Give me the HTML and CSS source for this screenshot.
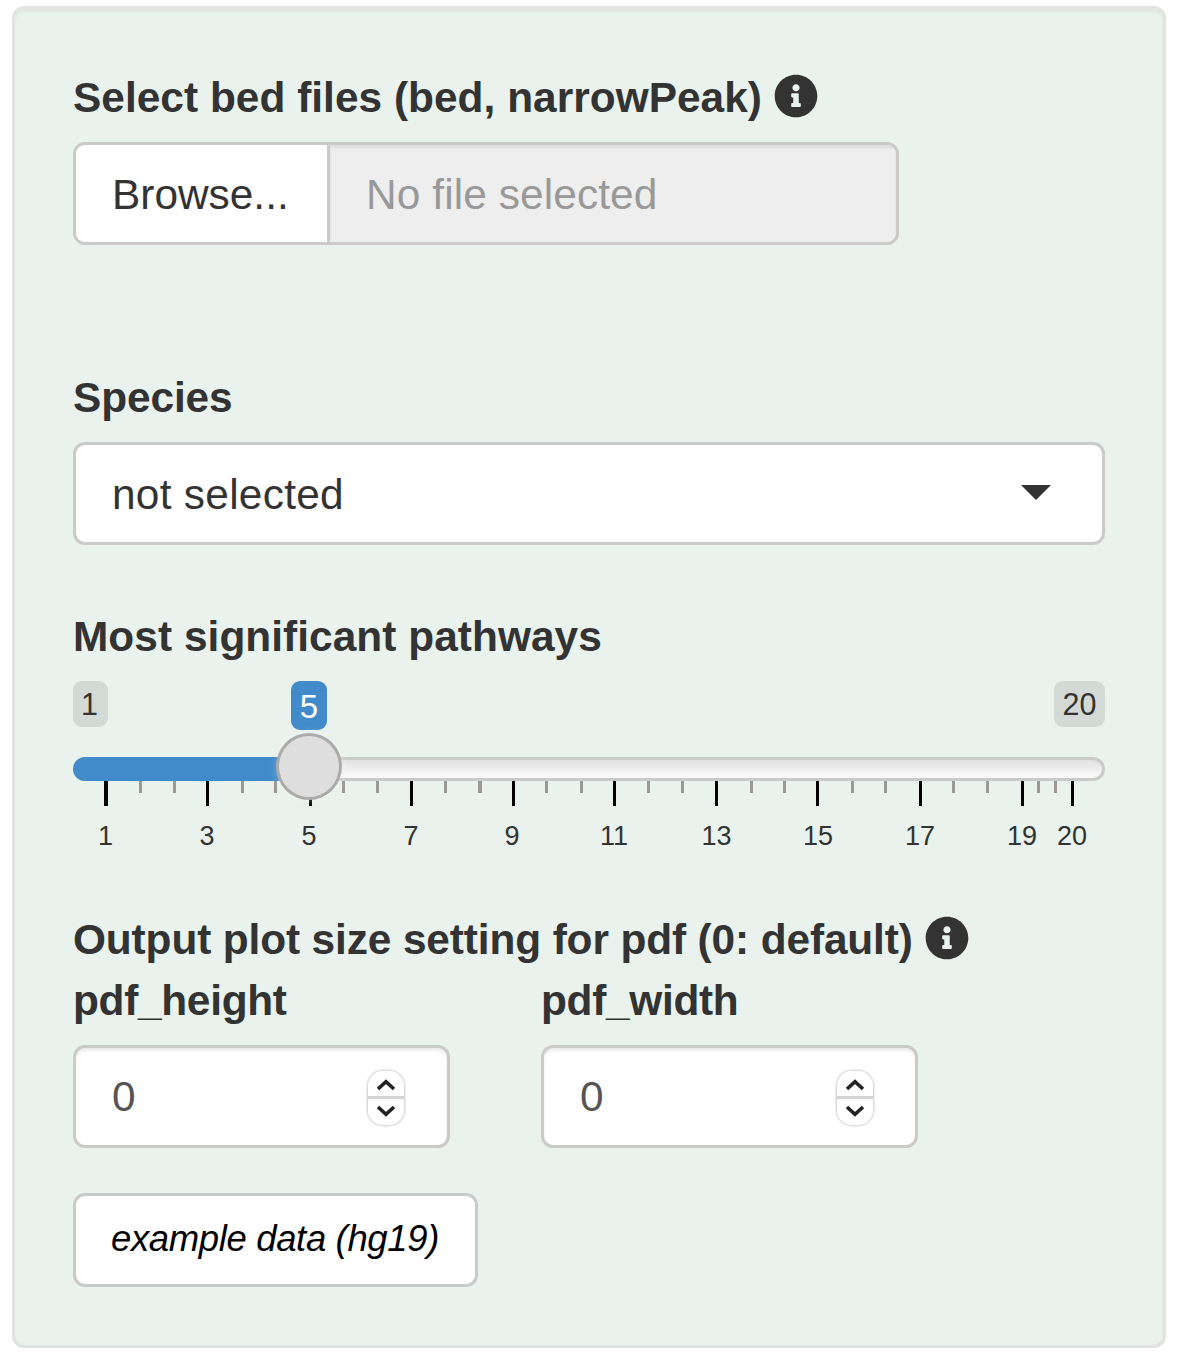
FILE: index.html
```
<!DOCTYPE html>
<html lang="en">
<head>
<meta charset="utf-8">
<title>Pathway settings</title>
<link rel="stylesheet" href="styles.css">
</head>
<body>
<svg class="defs" width="0" height="0" aria-hidden="true">
  <symbol id="info" viewBox="0 0 512 512"><path fill="currentColor" d="M256 8C119.043 8 8 119.083 8 256c0 136.997 111.043 248 248 248s248-111.003 248-248C504 119.083 392.957 8 256 8zm0 110c23.196 0 42 18.804 42 42s-18.804 42-42 42-42-18.804-42-42 18.804-42 42-42zm56 254c0 6.627-5.373 12-12 12h-88c-6.627 0-12-5.373-12-12v-24c0-6.627 5.373-12 12-12h12v-64h-12c-6.627 0-12-5.373-12-12v-24c0-6.627 5.373-12 12-12h64c6.627 0 12 5.373 12 12v100h12c6.627 0 12 5.373 12 12v24z"/></symbol>
  <symbol id="chevrons" viewBox="0 0 36 54"><g fill="none" stroke="#222" stroke-width="3.6"><path d="M10 18 18 10.7 26 18"/><path d="M10 36 18 43.3 26 36"/></g></symbol>
</svg>
<form class="well">
  <div class="label label-files"><span>Select bed files (bed, narrowPeak)</span><svg class="info"><use href="#info"/></svg></div>
  <div class="file">
    <div class="browse"><span>Browse...</span></div>
    <div class="filename"><span>No file selected</span></div>
  </div>

  <div class="label label-species"><span>Species</span></div>
  <div class="box select"><span>not selected</span><svg class="caret" viewBox="0 0 30 15"><path fill="#333" d="M0 0h30L15 15z"/></svg></div>

  <div class="label label-pathways"><span>Most significant pathways</span></div>
  <div class="slider">
    <div class="badges">
      <span class="badge min">1</span>
      <span class="badge current">5</span>
      <span class="badge max">20</span>
    </div>
    <div class="track"><div class="fill"></div><div class="handle"></div></div>
    <svg class="ticks" viewBox="73 781 1032 76" shape-rendering="crispEdges">
      <path fill="#000" d="M104 781h4v25h-4zM206 781h3v25h-3zM309 781h3v25h-3zM410 781h3v25h-3zM512 781h3v25h-3zM613 781h3v25h-3zM715 781h3v25h-3zM816 781h3v25h-3zM919 781h3v25h-3zM1021 781h3v25h-3zM1071 781h3v25h-3z"/>
      <path fill="#999" d="M139 781h3v12h-3zM173 781h3v12h-3zM241 781h3v12h-3zM274 781h3v12h-3zM342 781h3v12h-3zM376 781h3v12h-3zM444 781h3v12h-3zM478 781h4v12h-4zM545 781h3v12h-3zM580 781h3v12h-3zM647 781h3v12h-3zM681 781h3v12h-3zM750 781h3v12h-3zM783 781h3v12h-3zM851 781h3v12h-3zM884 781h3v12h-3zM952 781h3v12h-3zM986 781h3v12h-3zM1037 781h3v12h-3zM1054 781h3v12h-3z"/>
      <g class="tick-text">
        <text x="105.5" y="844.5">1</text><text x="207" y="844.5">3</text><text x="309" y="844.5">5</text><text x="411" y="844.5">7</text><text x="512" y="844.5">9</text><text x="614" y="844.5">11</text><text x="716.5" y="844.5">13</text><text x="818" y="844.5">15</text><text x="920" y="844.5">17</text><text x="1022" y="844.5">19</text><text x="1072" y="844.5">20</text>
      </g>
    </svg>
  </div>

  <div class="label label-output"><span>Output plot size setting for pdf (0: default)</span><svg class="info"><use href="#info"/></svg></div>
  <div class="sizes">
    <div class="size">
      <div class="label label-height"><span>pdf_height</span></div>
      <div class="box number"><span>0</span><svg class="spinner"><use href="#chevrons"/></svg></div>
    </div>
    <div class="size">
      <div class="label label-width"><span>pdf_width</span></div>
      <div class="box number number-width"><span>0</span><svg class="spinner"><use href="#chevrons"/></svg></div>
    </div>
  </div>
  <div class="box example"><span>example data (hg19)</span></div>
</form>
</body>
</html>
```
FILE: styles.css
```
* { box-sizing: border-box; }
body {
  margin: 0;
  background: #fff;
  color: #333;
  font: 42.4px/60px "Liberation Sans", Arial, sans-serif;
  white-space: nowrap;
}
.defs { display: block; height: 0; }
.well {
  width: 1154px;
  height: 1342px;
  margin: 6px 0 0 12px;
  padding: 58px 58px 0;
  border: 3px solid #e1e3e2;
  border-radius: 12px;
  background: #e9f2ed;
  box-shadow: inset 0 3px 3px rgba(0, 0, 0, .05);
}
.label {
  display: flex;
  height: 60px;
  padding-top: 1px;
  font-weight: bold;
}
.info { width: 44px; height: 44px; margin: 6px 0 0 12px; }
.label-files { letter-spacing: .03px; }
.label-height { letter-spacing: -.3px; }
.label-width { letter-spacing: -.3px; }

.file {
  display: flex;
  width: 826px;
  height: 103px;
  margin-top: 15px;
  border: 3px solid #cacaca;
  border-radius: 12px;
  overflow: hidden;
}
.browse {
  width: 254px;
  padding: 20px 0 0 36px;
  background: #fff;
  border-right: 3px solid #cacaca;
}
.filename {
  flex: 1;
  padding: 20px 0 0 36px;
  background: #eee;
  color: #999;
  letter-spacing: .1px;
  box-shadow: inset 0 3px 3px rgba(0, 0, 0, .075);
}
.box {
  display: flex;
  height: 103px;
  border: 3px solid #cacaca;
  border-radius: 12px;
  background: #fff;
}
.label-species { margin-top: 122px; letter-spacing: -.1px; }
.select {
  justify-content: space-between;
  margin-top: 15px;
  padding: 20px 51px 0 36px;
  letter-spacing: .28px;
}
.caret { width: 30px; height: 15px; margin-top: 20px; }

.label-pathways { margin-top: 61px; letter-spacing: .05px; }
.slider { margin-top: 15px; }
.badges { display: flex; height: 50px; color: #333; }
.badge {
  height: 46px;
  border-radius: 9px;
  background: #d3dad6;
  font-size: 30.5px;
  line-height: 47px;
  text-align: center;
}
.min { width: 35px; padding-right: 2px; }
.current {
  width: 36px;
  height: 49px;
  margin-left: 183px;
  background: #428bca;
  color: #fff;
  font-size: 33px;
  line-height: 51px;
}
.max { width: 51px; margin-left: auto; }
.track {
  position: relative;
  height: 24px;
  margin-top: 26px;
  border: 3px solid #cacaca;
  border-radius: 12px;
  background: linear-gradient(#e1e1e1, #fbfbfb);
}
.fill {
  width: 236px;
  height: 24px;
  margin: -3px 0 0 -3px;
  border-radius: 12px 0 0 12px;
  background: #428bca;
}
.handle {
  position: absolute;
  left: 200px;
  top: -27px;
  width: 66px;
  height: 67px;
  border: 3px solid #ababab;
  border-radius: 50%;
  background: #dedede;
  box-shadow: 1px 1px 9px rgba(255, 255, 255, .3);
}
.ticks { display: block; width: 1032px; height: 76px; }
.tick-text { fill: #333; font-size: 27px; text-anchor: middle; }

.label-output { margin-top: 52px; letter-spacing: -.125px; }
.sizes { display: flex; gap: 91px; margin-top: 1px; }
.size { width: 377px; }
.number {
  justify-content: space-between;
  margin-top: 15px;
  padding: 19px 43px 0 36px;
  color: #555;
  box-shadow: inset 0 3px 3px rgba(0, 0, 0, .075);
}
.number-width { padding-right: 42px; }
.spinner {
  width: 36px;
  height: 54px;
  margin-top: 4px;
  border-radius: 15px;
  background: linear-gradient(#fff 25px, #d4d4d4 25px, #d4d4d4 28px, #f7f7f7 28px, #fff 32px);
  box-shadow: 0 0 3px rgba(0, 0, 0, .42);
}
.example {
  width: 405px;
  height: 94px;
  margin-top: 45px;
  padding: 13px 0 0 35px;
  color: #000;
  font-size: 36.5px;
  font-style: italic;
  letter-spacing: -.36px;
}
```
